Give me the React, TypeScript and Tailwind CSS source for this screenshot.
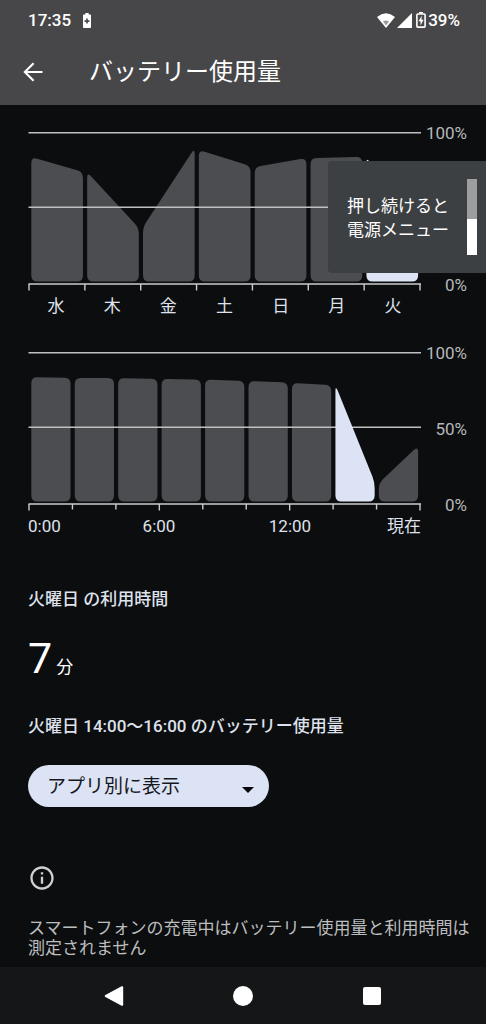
import React from "react";

type Point = [number, number];
type Bar = { from: number; to: number; active?: boolean };

const PLOT_WIDTH = 393;
const PLOT_HEIGHT = 162;
const AXIS_Y = 154;
const BAR_BOTTOM = 151.5;

const dailyBars: Bar[] = [
  { from: 27, to: 42 },
  { from: 42, to: 98 },
  { from: 97, to: 18 },
  { from: 20, to: 36 },
  { from: 37, to: 28 },
  { from: 28, to: 27 },
  { from: 27, to: 110, active: true },
];

const hourlyBars: Bar[] = [
  { from: 27, to: 28 },
  { from: 28, to: 28 },
  { from: 28, to: 29 },
  { from: 29, to: 29.5 },
  { from: 29.5, to: 31 },
  { from: 31, to: 32.5 },
  { from: 33, to: 35 },
  { from: 35, to: 132, active: true },
  { from: 133, to: 96 },
];

const weekdays = ["水", "木", "金", "土", "日", "月", "火"];

/** Closed polygon whose corners are softened with quadratic curves. */
function roundedPath(points: Point[], radius: number) {
  const toward = (a: Point, b: Point): Point => {
    const length = Math.hypot(b[0] - a[0], b[1] - a[1]);
    const t = Math.min(radius / length, 0.5);
    return [a[0] + (b[0] - a[0]) * t, a[1] + (b[1] - a[1]) * t];
  };
  return (
    points
      .map((p, i) => {
        const prev = points[(i + points.length - 1) % points.length];
        const next = points[(i + 1) % points.length];
        const start = toward(p, prev);
        const end = toward(p, next);
        return `${i === 0 ? "M" : "L"}${start.join(" ")}Q${p.join(" ")} ${end.join(" ")}`;
      })
      .join("") + "Z"
  );
}

function Chart({
  bars,
  majorEvery,
  yLabels,
  title,
  children,
}: {
  bars: Bar[];
  majorEvery: number;
  yLabels: string[];
  title: string;
  children: React.ReactNode;
}) {
  const pitch = (PLOT_WIDTH - 2) / bars.length;
  const shapes = bars.map((bar, i) => {
    const left = 1 + i * pitch + 2.3;
    const right = 1 + (i + 1) * pitch - 1.9;
    const d = roundedPath(
      [
        [left, bar.from],
        [right, bar.to],
        [right, BAR_BOTTOM],
        [left, BAR_BOTTOM],
      ],
      6,
    );
    return { d, active: bar.active };
  });

  return (
    <section aria-label={title}>
      <div className="flex">
        <div className="min-w-0 flex-1">
          <svg viewBox={`0 0 ${PLOT_WIDTH} ${PLOT_HEIGHT}`} className="block h-auto w-full" aria-hidden="true">
            {shapes
              .filter((shape) => !shape.active)
              .map((shape) => (
                <path key={shape.d} d={shape.d} fill="#4b4d51" />
              ))}
            <path d="M.5 2.8H393M.5 77.3H393" stroke="#bfc0bf" strokeWidth="1.6" />
            {/* The selected bar sits above the grid lines. */}
            {shapes
              .filter((shape) => shape.active)
              .map((shape) => (
                <path key={shape.d} d={shape.d} fill="#dce3f4" />
              ))}
            <path d={`M.5 ${AXIS_Y}H393`} stroke="#cbccce" strokeWidth="1.6" />
            {Array.from({ length: bars.length + 1 }, (_, i) => (
              <path
                key={i}
                d={`M${1 + i * pitch} ${AXIS_Y}V${i % majorEvery === 0 ? 160.5 : 159.5}`}
                stroke="#cbccce"
                strokeWidth="1.4"
              />
            ))}
          </svg>
          {children}
        </div>
        <div className="w-[46px]">
          <div className="-mt-[7px] flex h-[172px] flex-col justify-between text-right text-[17px] leading-5 text-[#b6b7b9]">
            {yLabels.map((label) => (
              <span key={label}>{label}</span>
            ))}
          </div>
        </div>
      </div>
    </section>
  );
}

function StatusBar() {
  return (
    <div className="flex h-10 items-center justify-between pr-[26px] pl-7 text-[17px] leading-5 font-medium">
      <div className="flex items-center gap-3">
        <span>17:35</span>
        <svg viewBox="0 0 8 15" className="h-[15px] w-2" aria-hidden="true">
          <path d="M2.3 0h3.4v1.4h1.5q.8 0 .8.8v12q0 .8-.8.8H.8q-.8 0-.8-.8v-12q0-.8.8-.8h1.5z" fill="#fff" />
          <path d="M4 5.6v5M1.6 8.1h4.8" stroke="#474749" strokeWidth="1.6" />
        </svg>
      </div>
      <div className="flex items-center">
        <svg viewBox="0 0 18 15" className="h-[15px] w-[18px]" aria-hidden="true">
          <path d="M0 3.9Q9-3.5 18 3.9L9 15z" fill="#fff" />
          <path d="M6 8.2q3-1.4 6 0L9 12.6z" fill="#9a9a9b" />
        </svg>
        <svg viewBox="0 0 15 15" className="ml-0.5 h-[15px] w-[15px]" aria-hidden="true">
          <path d="M15 0v15H0z" fill="#fff" />
        </svg>
        <svg viewBox="0 0 10 16" className="mr-0.5 ml-1 h-4 w-2.5" aria-hidden="true">
          <path d="M3 0h4v1.5H3z" fill="#fff" />
          <rect x=".9" y="2" width="8.2" height="13.1" rx=".9" fill="none" stroke="#fff" strokeWidth="1.6" />
          <path d="M5.7 3.8 2.5 9.2h2v4.2l3.1-5.6h-2z" fill="#fff" />
        </svg>
        <span>39%</span>
      </div>
    </div>
  );
}

function PowerHint() {
  return (
    <aside className="absolute top-[161px] right-0 flex h-28 items-center justify-between rounded-l-sm bg-[#3d4043] pr-[9px] pl-[19px] text-white">
      <p className="pt-0.5 text-[17px] leading-6">
        押し続けると
        <br />
        電源メニュー
      </p>
      <div className="ml-[18px] flex h-[76px] w-2.5 flex-col bg-white">
        <div className="h-10 bg-[#9c9e9f]" />
      </div>
    </aside>
  );
}

export default function App() {
  return (
    <div className="relative flex min-h-screen flex-col bg-[#0c0d0f] font-['Roboto','Noto_Sans_CJK_JP',sans-serif] text-[#dfe2ec]">
      <header className="bg-[#474749] text-white">
        <StatusBar />
        <div className="flex h-[65px] items-center pb-0.5 pl-[23px]">
          <button type="button" aria-label="戻る" className="mr-[46px] flex">
            <svg viewBox="0 0 20 20" className="h-5 w-5" fill="none" stroke="#fff" strokeWidth="2.1" aria-hidden="true">
              <path d="M19.5 10H2M10.6 1.2 1.8 10l8.8 8.8" />
            </svg>
          </button>
          <h1 className="text-2xl">バッテリー使用量</h1>
        </div>
      </header>

      <main className="flex-1 pb-[9px]">
        <div className="flex flex-col gap-8 pt-[25px] pr-[19px] pl-7">
          <Chart bars={dailyBars} majorEvery={1} yLabels={["100%", "0%"]} title="曜日別">
            <div className="mt-0.5 grid grid-cols-7 text-center text-[17px] leading-6">
              {weekdays.map((day) => (
                <span key={day}>{day}</span>
              ))}
            </div>
          </Chart>
          <Chart bars={hourlyBars} majorEvery={3} yLabels={["100%", "50%", "0%"]} title="時間別">
            <div className="mt-0.5 grid grid-cols-9 text-center text-[17px] leading-6">
              <span className="col-span-2 text-left">0:00</span>
              <span className="col-span-2">6:00</span>
              <span className="col-span-2 col-start-6">12:00</span>
              <span className="col-span-2 text-right">現在</span>
            </div>
          </Chart>
        </div>

        <div className="pr-3 pl-7">
          <h2 className="mt-[49px] text-[17px] leading-6 font-medium">火曜日 の利用時間</h2>
          <p className="mt-[21px] flex items-baseline gap-1 text-white">
            <span className="text-[43px] leading-[52px]">7</span>
            <span className="text-[17px] leading-6">分</span>
          </p>
          <h2 className="mt-[30px] text-[17px] leading-6 font-medium">火曜日 14:00～16:00 のバッテリー使用量</h2>

          <div className="relative mt-[27px] h-[42px] w-[241px]">
            <select
              aria-label="表示方法"
              className="h-full w-full appearance-none rounded-full bg-[#dce3f4] pt-0.5 pr-10 pl-[19px] text-[19px] text-[#15171d]"
            >
              <option>アプリ別に表示</option>
            </select>
            <svg
              viewBox="0 0 12 6"
              className="pointer-events-none absolute top-[22px] right-[15px] h-1.5 w-3"
              aria-hidden="true"
            >
              <path d="M0 0h12L6 6z" fill="#08090b" />
            </svg>
          </div>

          <svg viewBox="0 0 24 24" className="mt-[57px] h-7 w-7" fill="#d0d0d1" aria-hidden="true">
            <path d="M11 7h2v2h-2zm0 4h2v6h-2zm1-9C6.48 2 2 6.48 2 12s4.48 10 10 10 10-4.48 10-10S17.52 2 12 2zm0 18c-4.41 0-8-3.59-8-8s3.59-8 8-8 8 3.59 8 8-3.59 8-8 8z" />
          </svg>
          <p className="mt-[26px] text-[17px] leading-5 text-[#bdbebf]">
            スマートフォンの充電中はバッテリー使用量と利用時間は測定されません
          </p>
        </div>
      </main>

      <nav className="grid h-[57px] grid-cols-[1fr_20px_109px_20px_109px_20px_1fr] items-center bg-[#151617]">
        <button type="button" aria-label="戻る" className="col-start-2">
          <svg viewBox="0 0 20 20" className="h-5 w-5" aria-hidden="true">
            <path d="M17.6.3Q19.2-.2 19.2 1.6v16.8q0 1.8-1.6 1.3L1.4 11.1Q0 10 1.4 8.9z" fill="#fff" />
          </svg>
        </button>
        <button type="button" aria-label="ホーム" className="col-start-4 h-5 w-5 rounded-full bg-white" />
        <button type="button" aria-label="履歴" className="col-start-6 h-[18px] w-[18px] justify-self-center rounded-xs bg-white" />
      </nav>

      <PowerHint />
    </div>
  );
}
